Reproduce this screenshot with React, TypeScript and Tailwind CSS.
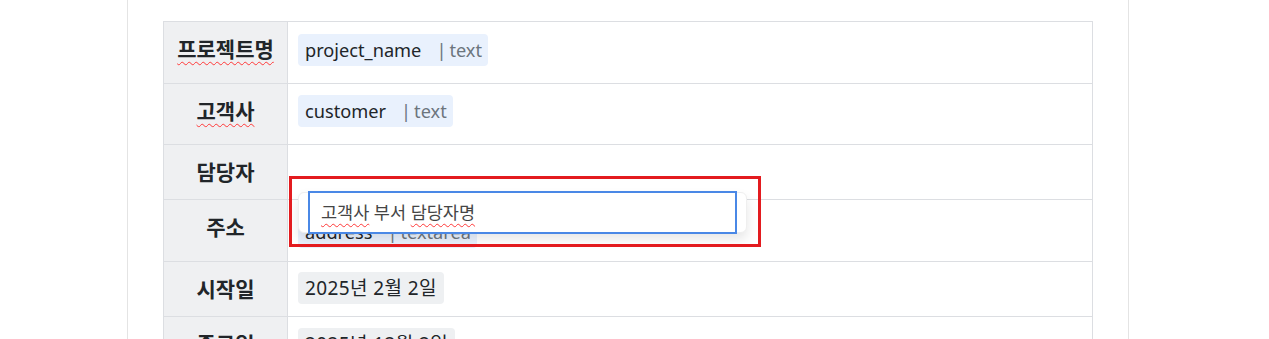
import React from "react";

const font = { fontFamily: '"Noto Sans", "Noto Sans CJK KR", sans-serif' };

function TypeChip({ name, type }: { name: string; type: string }) {
  return (
    <span className="inline-flex h-[32px] items-center rounded-[4px] bg-[#e9f1fd] pl-[7px] pr-[6px] text-[18.2px] leading-none text-[#212529]">
      <span>{name}</span>
      <span className="ml-[15px] text-[#6c757d]">|</span>
      <span className="ml-[3px] text-[#6c757d]">{type}</span>
    </span>
  );
}

function DateChip({ text }: { text: string }) {
  return (
    <span className="inline-flex h-[32px] items-center rounded-[4px] bg-[#eef0f2] px-[7px] text-[19px] leading-none tracking-[0.4px] text-[#212529]">
      {text}
    </span>
  );
}

const squiggle =
  "underline decoration-wavy decoration-[#ff3838] decoration-[1px] underline-offset-[4px]";

function Row({
  label,
  h,
  lpad,
  vpad,
  wavy,
  children,
}: {
  label: string;
  h: string;
  lpad?: string;
  vpad?: string;
  wavy?: boolean;
  children?: React.ReactNode;
}) {
  return (
    <div className={`grid grid-cols-[124px_1fr] border-b border-[#dcdee2] ${h}`}>
      <div
        className={`flex items-center justify-center border-r border-[#dcdee2] bg-[#eff0f2] ${lpad ?? ""}`}
      >
        <span className={`text-[21px] font-bold leading-none text-[#212529] ${wavy ? squiggle : ""}`}>
          {label}
        </span>
      </div>
      <div className={`flex items-center pl-[10px] ${vpad ?? ""}`}>{children}</div>
    </div>
  );
}

export default function App() {
  return (
    <div className="h-[339px] w-full overflow-hidden bg-white" style={font}>
      <div className="ml-[127px] h-full w-[1002px] border-x border-[#e4e4e4] pl-[35px] pt-[21px]">
        <div className="relative w-[930px] border-l border-r border-t border-[#dcdee2]">
          <Row label="프로젝트명" h="h-[62px]" lpad="pb-[6px]" vpad="pb-[5px]" wavy>
            <TypeChip name="project_name" type="text" />
          </Row>
          <Row label="고객사" h="h-[61px]" lpad="pb-[6px]" vpad="pb-[6px]" wavy>
            <TypeChip name="customer" type="text" />
          </Row>
          <Row label="담당자" h="h-[55px]" />
          <Row label="주소" h="h-[62px]" lpad="pb-[7px]" vpad="pt-[3px]">
            <TypeChip name="address" type="textarea" />
          </Row>
          <Row label="시작일" h="h-[55px]" vpad="pb-[2px]">
            <DateChip text="2025년 2월 2일" />
          </Row>
          <Row label="종료일" h="h-[55px]">
            <DateChip text="2025년 12월 2일" />
          </Row>

          {/* popover card */}
          <div className="absolute left-[134px] top-[170px] h-[41px] w-[449px] rounded-[6px] border border-[#efefef] bg-white shadow-[0_6px_12px_rgba(0,0,0,0.10)]" />
          {/* input */}
          <div className="absolute left-[144px] top-[169px] flex h-[43px] w-[429px] items-center border-2 border-[#4a88e6] bg-white pl-[11px] text-[17.5px] leading-none text-[#454545]">
            <span className={squiggle}>고객사</span>
            <span>&nbsp;부서&nbsp;</span>
            <span className={squiggle}>담당자명</span>
          </div>
          {/* red annotation box */}
          <div className="pointer-events-none absolute left-[125px] top-[154px] h-[71px] w-[472px] border-[3px] border-[#e31b1f]" />
        </div>
      </div>
    </div>
  );
}
